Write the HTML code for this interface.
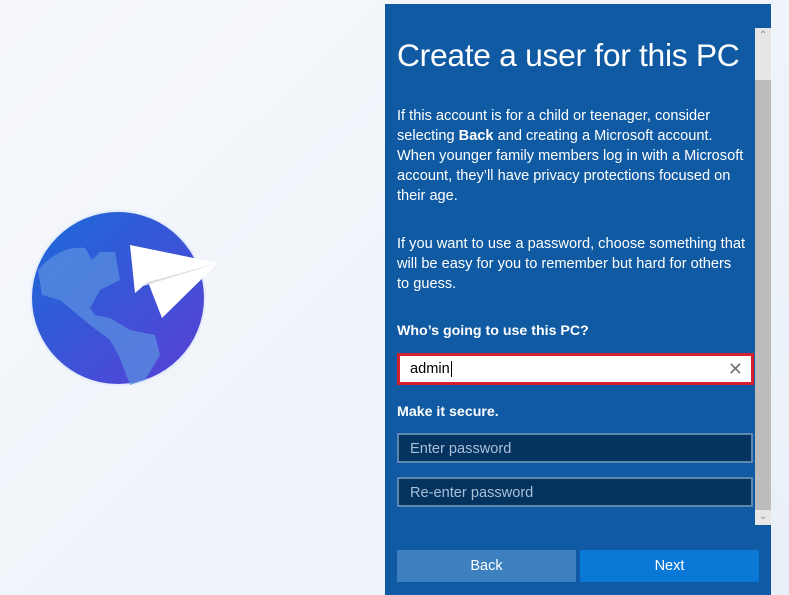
<!DOCTYPE html>
<html><head><style>
body{margin:0;width:789px;height:595px;overflow:hidden;background:linear-gradient(135deg,#f6f8fc,#eaf0f8);font-family:"Liberation Sans",sans-serif;position:relative}
.panel{position:absolute;left:385px;top:4px;width:386px;height:591px;background:#0f5aa2;color:#fff}
h1{position:absolute;left:12px;top:33px;margin:0;font-weight:300;font-size:31.8px;letter-spacing:-0.3px;white-space:nowrap}
.p{position:absolute;left:12px;font-size:14.6px;line-height:20px;width:370px;white-space:nowrap}
.lbl{position:absolute;left:12px;font-size:14.2px;font-weight:bold}
.sb{position:absolute;left:370px;top:24px;width:16px;height:497px;background:#e6e6e6}
.thumb{position:absolute;left:370px;top:76px;width:16px;height:430px;background:#bcbcbc}
.in{position:absolute;left:12px;width:356px;height:30px;box-sizing:border-box;font-size:14.6px;line-height:28px;padding-left:11px}
.btn{position:absolute;top:546px;height:32px;line-height:32px;text-align:center;font-size:14.5px}
</style></head><body>
<svg style="position:absolute;left:0;top:190px" width="240" height="210">
<defs><linearGradient id="g" x1="0" y1="0" x2="1" y2="1"><stop offset="0" stop-color="#1a6ad8"/><stop offset="1" stop-color="#5a3fd6"/></linearGradient></defs>
<circle cx="118" cy="108" r="88" fill="#d6e4fb" opacity="0.5"/>
<circle cx="118" cy="108" r="86" fill="url(#g)"/>
<path d="M38 80 Q60 55 85 58 L92 70 L100 62 L115 62 L120 90 L100 100 L90 118 L95 125 L110 128 L130 140 L155 145 L160 165 L145 190 L130 195 L120 168 L110 150 L90 135 L60 110 L42 105 Z" fill="#5a8ee0" opacity="0.75"/>
<path d="M130 55 L218 73 L162 128 L148 92 L135 103 Z" fill="#fff"/>
<path d="M140 97 L218 73 L148 92 Z" fill="#d8dde4"/>
</svg>
<div class="panel">
<h1>Create a user for this PC</h1>
<div class="p" style="top:102px">If this account is for a child or teenager, consider<br>selecting <b>Back</b> and creating a Microsoft account.<br>When younger family members log in with a Microsoft<br>account, they’ll have privacy protections focused on<br>their age.</div>
<div class="p" style="top:230px">If you want to use a password, choose something that<br>will be easy for you to remember but hard for others<br>to guess.</div>
<div class="lbl" style="top:319px">Who’s going to use this PC?</div>
<div class="in" style="top:349px;left:12px;width:357px;height:32px;border:3px solid #d42030;background:#fff;color:#000;line-height:26px;padding-left:10px">admin<span style="border-left:1px solid #000;margin-left:1px"></span><span style="position:absolute;right:8px;top:0;color:#777;font-size:18px">✕</span></div>
<div class="lbl" style="top:400px">Make it secure.</div>
<div class="in" style="top:429px;background:#05335f;border:2px solid #5d86b0;color:#a8bfd8">Enter password</div>
<div class="in" style="top:473px;background:#05335f;border:2px solid #5d86b0;color:#a8bfd8">Re-enter password</div>
<div class="sb"></div><div class="thumb"></div>
<div style="position:absolute;left:374px;top:26px;color:#888;font-size:10px">⌃</div>
<div style="position:absolute;left:374px;top:507px;color:#888;font-size:10px">⌄</div>
<div class="btn" style="left:12px;width:179px;background:#3d80bf">Back</div>
<div class="btn" style="left:195px;width:179px;background:#0a78d7">Next</div>
</div>
</body></html>
